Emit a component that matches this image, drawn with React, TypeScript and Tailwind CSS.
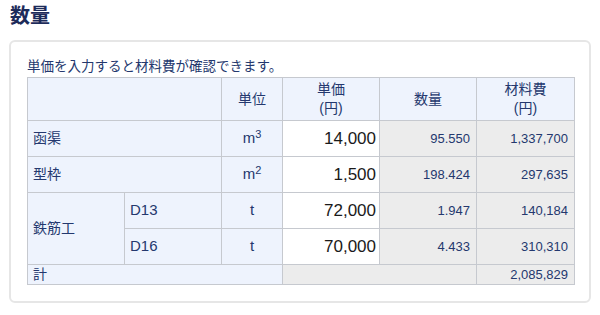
import React from "react";

const font = { fontFamily: '"Liberation Sans", Arial, "Noto Sans CJK JP", sans-serif' };

const th = "border border-[#c6c9cf] bg-[#eef3fd] text-[#24386e] font-normal text-[14px] leading-[19px]";
const lbl = "border border-[#c6c9cf] bg-[#eef3fd] text-[#24386e] text-[14px] text-left pl-[5px]";
const unit = "border border-[#c6c9cf] bg-[#eef3fd] text-[#24386e] text-[15px] text-center";
const inp = "border border-[#c6c9cf] bg-white text-[#1a1a1a] text-[17px] text-right pr-[3px]";
const calc = "border border-[#c6c9cf] bg-[#ececec] text-[#24386e] text-right pr-[6px]";

export default function App() {
  return (
    <div className="w-[600px] h-[315px] bg-white" style={font}>
      <h1 className="pl-[10px] pt-[4px] text-[20px] font-bold text-[#1d2b5a] leading-[25px]">数量</h1>
      <div className="mx-[9px] mt-[11px] h-[263px] rounded-[6px] border-2 border-[#e6e6e6] pl-[16px] pt-[17px]">
        <p className="text-[13.5px] leading-[16px] text-[#24386e]">単価を入力すると材料費が確認できます。</p>
        <table className="mt-[2px] border-collapse table-fixed w-[547px]">
          <colgroup>
            <col className="w-[97px]" />
            <col className="w-[97px]" />
            <col className="w-[61px]" />
            <col className="w-[97px]" />
            <col className="w-[97px]" />
            <col className="w-[98px]" />
          </colgroup>
          <tbody>
            <tr className="h-[43px]">
              <td className={th} colSpan={2}></td>
              <td className={th + " text-center"}>単位</td>
              <td className={th + " text-center"}>単価<br />(円)</td>
              <td className={th + " text-center"}>数量</td>
              <td className={th + " text-center"}>材料費<br />(円)</td>
            </tr>
            <tr className="h-[36px]">
              <td className={lbl} colSpan={2}>函渠</td>
              <td className={unit}>m<sup className="text-[11px]">3</sup></td>
              <td className={inp}>14,000</td>
              <td className={calc + " text-[13px]"}>95.550</td>
              <td className={calc + " text-[13px]"}>1,337,700</td>
            </tr>
            <tr className="h-[36px]">
              <td className={lbl} colSpan={2}>型枠</td>
              <td className={unit}>m<sup className="text-[11px]">2</sup></td>
              <td className={inp}>1,500</td>
              <td className={calc + " text-[13px]"}>198.424</td>
              <td className={calc + " text-[13px]"}>297,635</td>
            </tr>
            <tr className="h-[36px]">
              <td className={lbl} rowSpan={2}>鉄筋工</td>
              <td className={lbl + " text-[15px]"}>D13</td>
              <td className={unit}>t</td>
              <td className={inp}>72,000</td>
              <td className={calc + " text-[13px]"}>1.947</td>
              <td className={calc + " text-[13px]"}>140,184</td>
            </tr>
            <tr className="h-[36px]">
              <td className={lbl + " text-[15px]"}>D16</td>
              <td className={unit}>t</td>
              <td className={inp}>70,000</td>
              <td className={calc + " text-[13px]"}>4.433</td>
              <td className={calc + " text-[13px]"}>310,310</td>
            </tr>
            <tr className="h-[20px]">
              <td className={lbl + " leading-[17px]"} colSpan={3}>計</td>
              <td className={calc} colSpan={2}></td>
              <td className={calc + " text-[13px] leading-[17px]"}>2,085,829</td>
            </tr>
          </tbody>
        </table>
      </div>
    </div>
  );
}
